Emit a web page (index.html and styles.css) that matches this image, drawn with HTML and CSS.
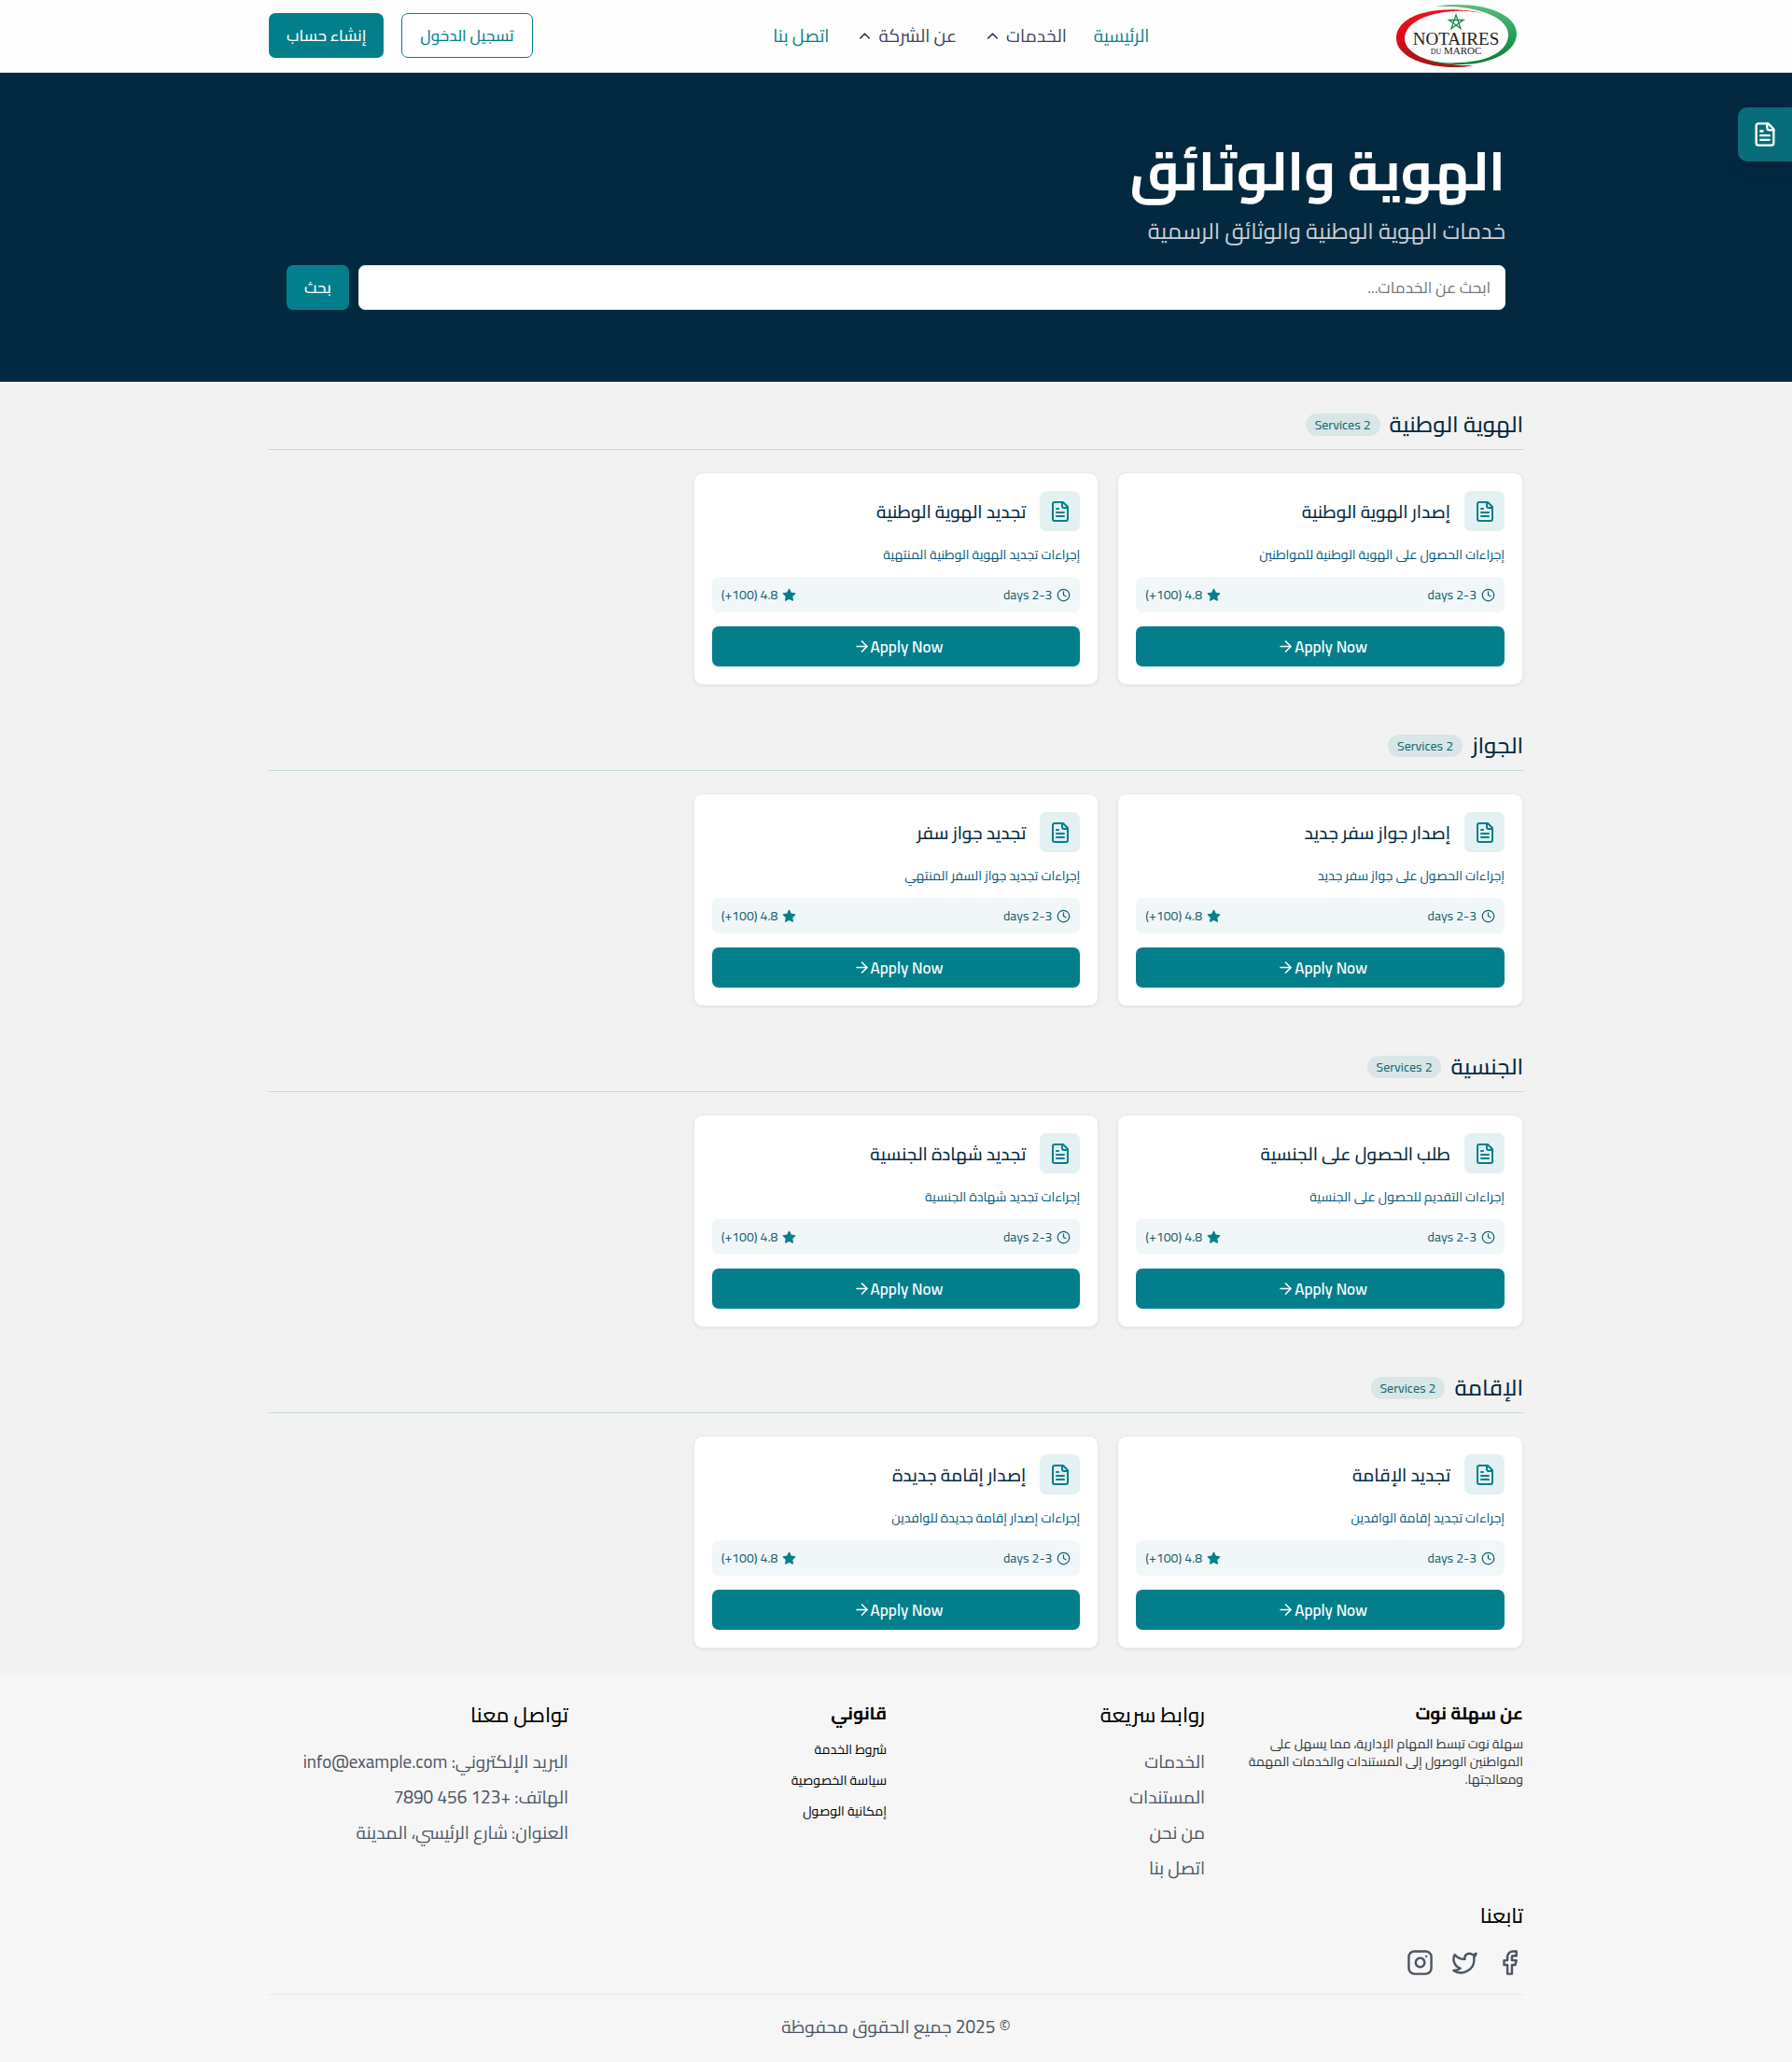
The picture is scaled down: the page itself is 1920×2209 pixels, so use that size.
FILE: index.html
```html
<!DOCTYPE html>
<html lang="ar" dir="rtl">
<head>
<meta charset="utf-8">
<meta name="viewport" content="width=device-width, initial-scale=1">
<title>الهوية والوثائق</title>
<link rel="stylesheet" href="styles.css">
</head>
<body>
<svg class="sprite" aria-hidden="true">
  <symbol id="file" viewBox="0 0 24 24"><path d="M15 2H6a2 2 0 0 0-2 2v16a2 2 0 0 0 2 2h12a2 2 0 0 0 2-2V7Z"/><path d="M14 2v4a2 2 0 0 0 2 2h4"/><path d="M10 9H8"/><path d="M16 13H8"/><path d="M16 17H8"/></symbol>
  <symbol id="clock" viewBox="0 0 24 24"><circle cx="12" cy="12" r="10"/><path d="M12 6v6l4 2"/></symbol>
  <symbol id="star" viewBox="0 0 24 24"><path fill="currentColor" d="M12 2l3.09 6.26L22 9.27l-5 4.87 1.18 6.88L12 17.77l-6.18 3.25L7 14.14 2 9.27l6.91-1.01L12 2z"/></symbol>
  <symbol id="arrow" viewBox="0 0 24 24"><path d="M5 12h14"/><path d="m12 5 7 7-7 7"/></symbol>
  <symbol id="chevron" viewBox="0 0 24 24"><path d="m18 15-6-6-6 6"/></symbol>
  <symbol id="facebook" viewBox="0 0 24 24"><path d="M18 2h-3a5 5 0 0 0-5 5v3H7v4h3v8h4v-8h3l1-4h-4V7a1 1 0 0 1 1-1h3z"/></symbol>
  <symbol id="twitter" viewBox="0 0 24 24"><path d="M22 4s-.7 2.1-2 3.4c1.6 10-9.4 17.3-18 11.6 2.2.1 4.4-.6 6-2C3 15.5.5 9.6 3 5c2.2 2.6 5.6 4.1 9 4-.9-4.2 4-6.6 7-3.8 1.1 0 3-1.2 3-1.2z"/></symbol>
  <symbol id="instagram" viewBox="0 0 24 24"><rect x="2" y="2" width="20" height="20" rx="5"/><path d="M16 11.37A4 4 0 1 1 12.63 8 4 4 0 0 1 16 11.37z"/><path d="M17.5 6.5h.01"/></symbol>
</svg>

<header class="header">
  <div class="container header-row">
    <a class="logo" href="#" aria-label="Notaires du Maroc">
      <svg viewBox="0 0 129 67" role="img" direction="ltr">
        <defs>
          <linearGradient id="red" x1="0" y1="0" x2="0" y2="1"><stop offset="0" stop-color="#f0101c"/><stop offset=".5" stop-color="#d8101a"/><stop offset="1" stop-color="#9c1a16"/></linearGradient>
          <linearGradient id="green" x1="0" y1="0" x2="0" y2="1"><stop offset="0" stop-color="#5cbb7c"/><stop offset=".5" stop-color="#2a9f5b"/><stop offset="1" stop-color="#087a3c"/></linearGradient>
        </defs>
        <path fill="url(#red)" d="M99 11C84 6 62 4 45 6 16 9 0 21 0 36c0 18 27 31 63 31 9 0 15-1 20-2-37 1-74-9-74-29C9 21 30 9 61 7c15-1 28 1 38 4z"/>
        <path fill="url(#green)" d="M42 2C51 0 59 0 66 0c36 0 63 13 63 31 0 20-28 33-60 33-16 0-29-2-39-5 13 3 26 4 39 3 31-1 51-13 51-30C120 13 84 0 42 2z"/>
        <path fill="none" stroke="#16884a" stroke-width="1.3" d="M64 11l5 14.500L56.500 16.500h15.500L59 25.500z"/>
        <text class="logo-name" x="64" y="43" text-anchor="middle">NOTAIRES</text>
        <text class="logo-sub" x="64" y="53" text-anchor="middle"><tspan class="logo-du">DU</tspan> MAROC</text>
      </svg>
    </a>
    <nav class="nav">
      <a class="nav-link" href="#">الرئيسية</a>
      <button class="nav-menu" type="button">الخدمات<svg class="icon chevron"><use href="#chevron"/></svg></button>
      <button class="nav-menu" type="button">عن الشركة<svg class="icon chevron"><use href="#chevron"/></svg></button>
      <a class="nav-link" href="#">اتصل بنا</a>
    </nav>
    <div class="auth">
      <button class="btn btn-outline" type="button">تسجيل الدخول</button>
      <button class="btn" type="button">إنشاء حساب</button>
    </div>
  </div>
</header>

<button class="float-btn" type="button" aria-label="المستندات"><svg class="icon"><use href="#file"/></svg></button>

<section class="hero">
  <div class="container hero-inner">
    <h1>الهوية والوثائق</h1>
    <p>خدمات الهوية الوطنية والوثائق الرسمية</p>
    <form class="search">
      <input type="search" placeholder="ابحث عن الخدمات..." aria-label="ابحث عن الخدمات">
      <button class="btn" type="button">بحث</button>
    </form>
  </div>
</section>

<main class="container main">
  <section class="group">
    <div class="group-head"><h2>الهوية الوطنية</h2><span class="badge">2 Services</span></div>
    <div class="cards">
      <article class="card">
        <div class="card-head"><span class="card-icon"><svg class="icon"><use href="#file"/></svg></span><h3>إصدار الهوية الوطنية</h3></div>
        <p>إجراءات الحصول على الهوية الوطنية للمواطنين</p>
        <div class="meta"><span><svg class="icon"><use href="#clock"/></svg>2-3 days</span><span><svg class="icon star"><use href="#star"/></svg>4.8 (100+)</span></div>
        <button class="apply" type="button">Apply Now<svg class="icon"><use href="#arrow"/></svg></button>
      </article>
      <article class="card">
        <div class="card-head"><span class="card-icon"><svg class="icon"><use href="#file"/></svg></span><h3>تجديد الهوية الوطنية</h3></div>
        <p>إجراءات تجديد الهوية الوطنية المنتهية</p>
        <div class="meta"><span><svg class="icon"><use href="#clock"/></svg>2-3 days</span><span><svg class="icon star"><use href="#star"/></svg>4.8 (100+)</span></div>
        <button class="apply" type="button">Apply Now<svg class="icon"><use href="#arrow"/></svg></button>
      </article>
    </div>
  </section>

  <section class="group">
    <div class="group-head"><h2>الجواز</h2><span class="badge">2 Services</span></div>
    <div class="cards">
      <article class="card">
        <div class="card-head"><span class="card-icon"><svg class="icon"><use href="#file"/></svg></span><h3>إصدار جواز سفر جديد</h3></div>
        <p>إجراءات الحصول على جواز سفر جديد</p>
        <div class="meta"><span><svg class="icon"><use href="#clock"/></svg>2-3 days</span><span><svg class="icon star"><use href="#star"/></svg>4.8 (100+)</span></div>
        <button class="apply" type="button">Apply Now<svg class="icon"><use href="#arrow"/></svg></button>
      </article>
      <article class="card">
        <div class="card-head"><span class="card-icon"><svg class="icon"><use href="#file"/></svg></span><h3>تجديد جواز سفر</h3></div>
        <p>إجراءات تجديد جواز السفر المنتهي</p>
        <div class="meta"><span><svg class="icon"><use href="#clock"/></svg>2-3 days</span><span><svg class="icon star"><use href="#star"/></svg>4.8 (100+)</span></div>
        <button class="apply" type="button">Apply Now<svg class="icon"><use href="#arrow"/></svg></button>
      </article>
    </div>
  </section>

  <section class="group">
    <div class="group-head"><h2>الجنسية</h2><span class="badge">2 Services</span></div>
    <div class="cards">
      <article class="card">
        <div class="card-head"><span class="card-icon"><svg class="icon"><use href="#file"/></svg></span><h3>طلب الحصول على الجنسية</h3></div>
        <p>إجراءات التقديم للحصول على الجنسية</p>
        <div class="meta"><span><svg class="icon"><use href="#clock"/></svg>2-3 days</span><span><svg class="icon star"><use href="#star"/></svg>4.8 (100+)</span></div>
        <button class="apply" type="button">Apply Now<svg class="icon"><use href="#arrow"/></svg></button>
      </article>
      <article class="card">
        <div class="card-head"><span class="card-icon"><svg class="icon"><use href="#file"/></svg></span><h3>تجديد شهادة الجنسية</h3></div>
        <p>إجراءات تجديد شهادة الجنسية</p>
        <div class="meta"><span><svg class="icon"><use href="#clock"/></svg>2-3 days</span><span><svg class="icon star"><use href="#star"/></svg>4.8 (100+)</span></div>
        <button class="apply" type="button">Apply Now<svg class="icon"><use href="#arrow"/></svg></button>
      </article>
    </div>
  </section>

  <section class="group">
    <div class="group-head"><h2>الإقامة</h2><span class="badge">2 Services</span></div>
    <div class="cards">
      <article class="card">
        <div class="card-head"><span class="card-icon"><svg class="icon"><use href="#file"/></svg></span><h3>تجديد الإقامة</h3></div>
        <p>إجراءات تجديد إقامة الوافدين</p>
        <div class="meta"><span><svg class="icon"><use href="#clock"/></svg>2-3 days</span><span><svg class="icon star"><use href="#star"/></svg>4.8 (100+)</span></div>
        <button class="apply" type="button">Apply Now<svg class="icon"><use href="#arrow"/></svg></button>
      </article>
      <article class="card">
        <div class="card-head"><span class="card-icon"><svg class="icon"><use href="#file"/></svg></span><h3>إصدار إقامة جديدة</h3></div>
        <p>إجراءات إصدار إقامة جديدة للوافدين</p>
        <div class="meta"><span><svg class="icon"><use href="#clock"/></svg>2-3 days</span><span><svg class="icon star"><use href="#star"/></svg>4.8 (100+)</span></div>
        <button class="apply" type="button">Apply Now<svg class="icon"><use href="#arrow"/></svg></button>
      </article>
    </div>
  </section>
</main>

<footer class="footer">
  <div class="container">
    <div class="footer-cols">
      <div class="footer-about">
        <h4>عن سهلة نوت</h4>
        <p>سهلة نوت تبسط المهام الإدارية، مما يسهل على المواطنين الوصول إلى المستندات والخدمات المهمة ومعالجتها.</p>
      </div>
      <div>
        <h3>روابط سريعة</h3>
        <ul class="links">
          <li><a href="#">الخدمات</a></li>
          <li><a href="#">المستندات</a></li>
          <li><a href="#">من نحن</a></li>
          <li><a href="#">اتصل بنا</a></li>
        </ul>
      </div>
      <div>
        <h4>قانوني</h4>
        <ul class="legal">
          <li><a href="#">شروط الخدمة</a></li>
          <li><a href="#">سياسة الخصوصية</a></li>
          <li><a href="#">إمكانية الوصول</a></li>
        </ul>
      </div>
      <div>
        <h3>تواصل معنا</h3>
        <ul class="links">
          <li>البريد الإلكتروني: info@example.com</li>
          <li>الهاتف: +123 456 7890</li>
          <li>العنوان: شارع الرئيسي، المدينة</li>
        </ul>
      </div>
      <div>
        <h3>تابعنا</h3>
        <div class="social">
          <a href="#" aria-label="Facebook"><svg class="icon"><use href="#facebook"/></svg></a>
          <a href="#" aria-label="Twitter"><svg class="icon"><use href="#twitter"/></svg></a>
          <a href="#" aria-label="Instagram"><svg class="icon"><use href="#instagram"/></svg></a>
        </div>
      </div>
    </div>
    <p class="copyright">© 2025 جميع الحقوق محفوظة</p>
  </div>
</footer>
</body>
</html>
```

FILE: styles.css
```css
:root {
  --teal: #037f8c;
  --navy: #02293f;
  --font: Cairo, "Noto Sans Arabic", "Open Sans", "DejaVu Sans", sans-serif;
}

* { box-sizing: border-box; }

body {
  margin: 0;
  background: #f2f2f2;
  color: #000;
  font-family: var(--font);
  font-size: 14px;
}

h1, h2, h3, h4, p, ul { margin: 0; padding: 0; }
ul { list-style: none; }
a { color: inherit; text-decoration: none; }
button, input { font-family: inherit; }
button { border: 0; cursor: pointer; }

.sprite { position: absolute; width: 0; height: 0; }
.container { width: 70%; margin: 0 auto; }

.icon {
  display: block;
  flex: none;
  fill: none;
  stroke: currentColor;
  stroke-width: 2;
  stroke-linecap: round;
  stroke-linejoin: round;
}

/* Header */
.header { padding-bottom: 1px; background: #fefefe; border-bottom: 1px solid #dfe5e8; }
.header-row {
  display: flex;
  justify-content: space-between;
  align-items: center;
  height: 76px;
}
.logo { padding: 0 7px; }
.logo svg { display: block; width: 129px; height: 67px; }
.logo-name { font: 19px "Liberation Serif", serif; fill: #222; }
.logo-sub { font: 11px "Liberation Serif", serif; fill: #222; }
.logo-du { font-size: 8px; }

.nav { display: flex; align-items: center; gap: 29px; color: var(--teal); font-size: 19px; }
.nav-menu {
  display: flex;
  align-items: center;
  gap: 5px;
  padding: 0;
  background: none;
  color: #3c4257;
  font-size: 19px;
}
.chevron { width: 19px; height: 19px; }

.auth { display: flex; gap: 19px; }
.btn {
  height: 48px;
  padding: 0 19px;
  border-radius: 7px;
  background: var(--teal);
  color: #fff;
  font-size: 17px;
  font-weight: 500;
  white-space: nowrap;
}
.btn-outline { border: 1px solid var(--teal); background: #fff; color: var(--teal); }

.float-btn {
  position: fixed;
  top: 115px;
  right: 0;
  display: grid;
  place-items: center;
  width: 58px;
  height: 58px;
  padding: 0;
  border-radius: 10px 0 0 10px;
  background: #096d79;
  color: #fff;
  box-shadow: 0 10px 15px rgba(0, 0, 0, .1);
}
.float-btn .icon { width: 28px; height: 28px; }

/* Hero */
.hero { background: var(--navy); color: #fff; }
.hero-inner { padding: 63px 19px 77px; }
.hero h1 { font-size: 58px; line-height: 84px; }
.hero p { margin-top: 1px; color: #c8d0d6; font-size: 24px; line-height: 44px; }
.search { display: flex; gap: 10px; margin-top: 14px; }
.search input {
  flex: 1;
  height: 48px;
  padding: 0 15px;
  border: 1px solid #e5e7eb;
  border-radius: 7px;
  background: #fff;
  font-size: 17px;
}
.search input::placeholder { color: #757575; }

/* Service groups */
.main { padding: 29px 0 30px; }
.group + .group { margin-top: 48px; }
.group-head {
  display: flex;
  align-items: center;
  gap: 10px;
  height: 44px;
  padding-bottom: 10px;
  border-bottom: 1px solid #c4d8dc;
}
.group-head h2 { color: var(--navy); font-size: 24px; font-weight: 500; line-height: 34px; }
.badge {
  padding: 0 10px;
  border-radius: 12px;
  background: #d8e6e7;
  color: #0c6472;
  font-size: 14px;
  line-height: 24px;
}
.cards { display: grid; grid-template-columns: repeat(3, 1fr); gap: 20px; margin-top: 24px; }
.card {
  padding: 19px;
  border: 1px solid #e3f0f1;
  border-radius: 10px;
  background: #fff;
  box-shadow: 0 1px 3px rgba(0, 0, 0, .08);
}
.card-head { display: flex; align-items: center; gap: 15px; }
.card-icon {
  display: grid;
  place-items: center;
  width: 43px;
  height: 43px;
  border-radius: 7px;
  background: #e4f1f2;
  color: var(--teal);
}
.card-icon .icon { width: 24px; height: 24px; }
.card h3 { color: var(--navy); font-size: 19px; font-weight: 500; line-height: 34px; }
.card p { margin-top: 14px; color: #04567a; font-size: 14px; line-height: 22px; }
.meta {
  display: flex;
  justify-content: space-between;
  height: 38px;
  margin-top: 13px;
  padding: 0 10px;
  border-radius: 7px;
  background: #f1f7f9;
  color: #14606f;
  font-size: 14px;
}
.meta span { display: flex; align-items: center; gap: 5px; }
.meta .icon { width: 15px; height: 15px; }
.meta .star { color: var(--teal); }
.apply {
  display: flex;
  align-items: center;
  justify-content: center;
  width: 100%;
  height: 43px;
  margin-top: 15px;
  border-radius: 7px;
  background: var(--teal);
  color: #fff;
  font-size: 17px;
  font-weight: 600;
}
.apply .icon { width: 19px; height: 19px; margin-left: 4px; }

/* Footer */
.footer { background: #f6f6f6; }
.footer-cols { display: grid; grid-template-columns: repeat(4, 1fr); gap: 21px 20px; padding: 25px 0 19px; }
.footer h3 { font-size: 22px; font-weight: 500; line-height: 32px; }
.footer h4 { font-size: 19px; font-weight: 700; line-height: 28px; }
.footer-about p { margin-top: 10px; color: #333; font-size: 14px; line-height: 19px; }
.links { display: grid; gap: 10px; margin-top: 20px; color: #4b5563; font-size: 19px; line-height: 28px; }
.legal { display: grid; gap: 11px; margin-top: 14px; font-size: 14px; line-height: 22px; }
.social { display: flex; gap: 19px; margin-top: 20px; color: #4b5563; }
.social .icon { width: 29px; height: 29px; }
.copyright {
  padding: 18px 0 22px;
  border-top: 1px solid #e5e7eb;
  color: #4b5563;
  font-size: 19px;
  line-height: 32px;
  text-align: center;
}
```
